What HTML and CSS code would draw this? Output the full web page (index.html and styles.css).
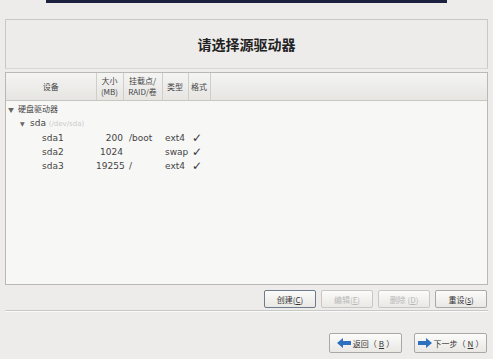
FILE: index.html
```html
<!DOCTYPE html>
<html lang="zh">
<head>
<meta charset="UTF-8" />
<title>请选择源驱动器</title>
<link rel="stylesheet" href="styles.css">
</head>
<body>
  <div class="topbar"></div>

  <div class="title-panel">
    <h1>请选择源驱动器</h1>
  </div>

  <div class="tree-panel">
    <table class="tree">
      <thead>
        <tr>
          <th class="c-dev">设备</th>
          <th class="c-size">大小<br>(MB)</th>
          <th class="c-mount">挂载点/<br>RAID/卷</th>
          <th class="c-type">类型</th>
          <th class="c-fmt">格式</th>
          <th class="c-rest"></th>
        </tr>
      </thead>
      <tbody>
        <tr class="group">
          <td colspan="6"><span class="tri">▼</span>硬盘驱动器</td>
        </tr>
        <tr class="disk">
          <td colspan="6"><span class="tri">▼</span>sda <span class="dim">(/dev/sda)</span></td>
        </tr>
        <tr class="part">
          <td class="name">sda1</td>
          <td class="num">200</td>
          <td class="mnt">/boot</td>
          <td class="typ">ext4</td>
          <td class="chk">✓</td>
          <td></td>
        </tr>
        <tr class="part">
          <td class="name">sda2</td>
          <td class="num">1024</td>
          <td class="mnt"></td>
          <td class="typ">swap</td>
          <td class="chk">✓</td>
          <td></td>
        </tr>
        <tr class="part">
          <td class="name">sda3</td>
          <td class="num">19255</td>
          <td class="mnt">/</td>
          <td class="typ">ext4</td>
          <td class="chk">✓</td>
          <td></td>
        </tr>
      </tbody>
    </table>
  </div>

  <div class="actions">
    <button class="btn focus">创建(<u>C</u>)</button>
    <button class="btn" disabled>编辑(<u>E</u>)</button>
    <button class="btn" disabled>删除 (<u>D</u>)</button>
    <button class="btn">重设(<u>s</u>)</button>
  </div>

  <hr class="sep">

  <div class="nav">
    <button class="btn nav-btn">
      <svg width="14" height="10" viewBox="0 0 14 10"><path d="M0 5 L6 0 L6 3 L14 3 L14 7 L6 7 L6 10 Z" fill="#2f6fc0"/></svg>
      返回（<u>B</u>）
    </button>
    <button class="btn nav-btn">
      <svg width="14" height="10" viewBox="0 0 14 10"><path d="M14 5 L8 0 L8 3 L0 3 L0 7 L8 7 L8 10 Z" fill="#2f6fc0"/></svg>
      下一步（<u>N</u>）
    </button>
  </div>
</body>
</html>
```

FILE: styles.css
```css
* {
  box-sizing: border-box;
}

body {
  margin: 0;
  width: 493px;
  height: 359px;
  overflow: hidden;
  background: #edecea;
  font-family: "DejaVu Sans", "Noto Sans CJK SC", sans-serif;
  font-size: 9px;
  color: #333;
}

.topbar {
  margin: 0 46px 0 46px;
  height: 3px;
  background: #1c2140;
}

.title-panel {
  margin: 16px 5px 0 5px;
  height: 50px;
  border: 1px solid #c9c8c4;
  border-bottom-color: #d8d7d3;
  display: flex;
  align-items: center;
  justify-content: center;
}

.title-panel h1 {
  margin: 0;
  font-family: "Noto Sans CJK SC", sans-serif;
  font-size: 14px;
  font-weight: bold;
  color: #222;
}

.tree-panel {
  margin: 3px 5px 0 5px;
  height: 213px;
  border: 1px solid #b9b8b4;
  background: #f7f7f6;
}

.tree {
  width: 100%;
  border-collapse: collapse;
  table-layout: fixed;
}

.tree th {
  height: 27px;
  font-weight: normal;
  font-family: "Noto Sans CJK SC", "DejaVu Sans", sans-serif;
  font-size: 8px;
  line-height: 11px;
  color: #444;
  background: linear-gradient(#f4f4f3, #e6e5e2);
  border-right: 1px solid #cfcecb;
  border-bottom: 1px solid #c7c6c2;
  padding: 0;
  white-space: nowrap;
}

.tree th.c-dev { width: 90px; }
.tree th.c-size { width: 27px; }
.tree th.c-mount { width: 39px; }
.tree th.c-type { width: 26px; }
.tree th.c-fmt { width: 22px; }
.tree th.c-rest { border-right: none; }

.tree td {
  padding: 0;
  height: 14px;
  color: #444;
  white-space: nowrap;
  overflow: visible;
}

.tree tr.group td {
  padding-top: 1px;
  height: 15px;
  font-family: "Noto Sans CJK SC", sans-serif;
  font-size: 8px;
}

.tree tr.disk td {
  padding-left: 12px;
  height: 16px;
}

.tri {
  display: inline-block;
  width: 12px;
  font-size: 6px;
  color: #666;
  padding-left: 2px;
}

.dim {
  color: #ccc;
  font-size: 7px;
}

.tree td.name {
  padding-left: 36px;
}

.tree td.num {
  text-align: right;
  padding-right: 0;
}

.tree td.mnt {
  padding-left: 6px;
}

.tree td.typ {
  padding-left: 3px;
}

.tree td.chk {
  text-align: center;
  font-size: 12px;
  color: #333;
  padding-right: 4px;
}

.actions {
  display: flex;
  justify-content: flex-end;
  gap: 5px;
  margin: 5px 6px 0 0;
}

.btn {
  font-family: "Noto Sans CJK SC", "DejaVu Sans", sans-serif;
  font-size: 8px;
  color: #333;
  background: linear-gradient(#fbfbfa, #e9e8e5);
  border: 1px solid #a9a8a4;
  border-radius: 2px;
  padding: 0;
  height: 18px;
  width: 52px;
}

.btn.focus {
  border-color: #6e7b8c;
}

.btn:disabled {
  color: #b8b8b8;
  border-color: #c8c7c3;
}

.sep {
  margin: 2px 5px 0 5px;
  border: none;
  border-top: 1px solid #c9c8c4;
  border-bottom: 1px solid #fafafa;
}

.nav {
  display: flex;
  justify-content: flex-end;
  gap: 12px;
  margin: 21px 6px 0 0;
}

.nav-btn {
  width: 73px;
  height: 20px;
  display: flex;
  align-items: center;
  justify-content: center;
  gap: 2px;
}
```
